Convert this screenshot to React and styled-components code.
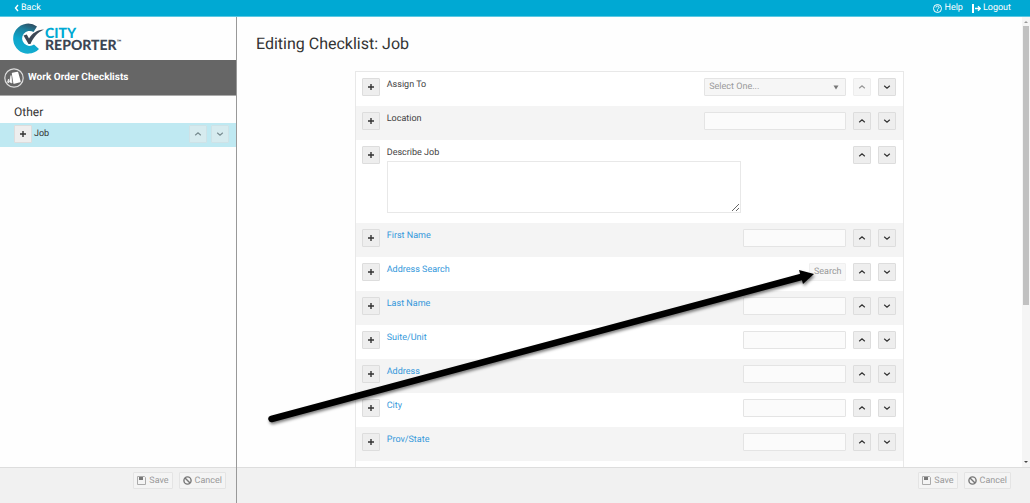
import styled, { createGlobalStyle } from "styled-components";

const GlobalStyle = createGlobalStyle`
  * {
    box-sizing: border-box;
  }
  body {
    margin: 0;
    font-family: Roboto, "Liberation Sans", sans-serif;
    font-size: 9px;
    line-height: 12px;
    text-rendering: geometricPrecision;
    color: #333;
    background-color: #fefefe;
  }
  button, input, select, textarea {
    font: inherit;
    text-rendering: inherit;
    margin: 0;
  }
`;

// Page frame

const Page = styled.div`
  height: 100vh;
  display: flex;
  flex-direction: column;
`;

const TopBar = styled.header`
  flex: none;
  display: flex;
  justify-content: space-between;
  height: 17px;
  padding: 0 19px 0 14px;
  background-color: #00a9d3;
  border-bottom: 1px solid #5cc8e2;
`;

const TopLinks = styled.nav`
  display: flex;
  gap: 9px;
`;

const TopLink = styled.a`
  display: flex;
  align-items: center;
  gap: 2px;
  color: white;
  text-decoration: none;
`;

const Panes = styled.div`
  flex: 1;
  min-height: 0;
  display: flex;
`;

const Sidebar = styled.aside`
  flex: none;
  display: flex;
  flex-direction: column;
  width: 237px;
  border-right: 1px solid #999;
`;

const Main = styled.main`
  position: relative;
  flex: 1;
  min-width: 0;
  display: flex;
  flex-direction: column;
`;

const PaneBody = styled.div`
  flex: 1;
  min-height: 0;
  display: flex;
  flex-direction: column;
  overflow: hidden;
`;

const Footer = styled.footer`
  flex: none;
  display: flex;
  justify-content: flex-end;
  gap: 6px;
  height: 36px;
  padding: 4px ${({ $inset }) => $inset}px 0;
  background-color: #f1f1f1;
  border-top: 1px solid #ddd;
`;

const FooterButton = styled.button`
  display: flex;
  align-items: center;
  gap: 3px;
  height: 17px;
  padding: 0 3px;
  color: #999;
  background-color: #f4f4f4;
  border: 1px solid #e4e4e4;
  border-radius: 1px;
`;

// Sidebar parts

const Logo = styled.div`
  display: flex;
  align-items: center;
  height: 43px;
  padding-left: 12px;
`;

const LogoText = styled.div`
  font-family: Lato, sans-serif;
  font-size: 14px;
  font-weight: 900;
  line-height: 12px;
  color: #3c4654;
`;

const LogoCity = styled.div`
  color: #00a9d3;
`;

const Trademark = styled.sup`
  font-size: 6px;
  line-height: 0;
`;

const SectionTitle = styled.h2`
  display: flex;
  align-items: center;
  gap: 4px;
  height: 36px;
  margin: 0;
  padding-left: 4px;
  color: white;
  background-color: #666;
  border-bottom: 1px solid #aaa;
  font-size: 10px;
  font-weight: 700;
`;

const GroupTitle = styled.h3`
  margin: 0;
  padding: 9px 14px 4px;
  font-size: 12px;
  font-weight: 400;
  line-height: 14px;
`;

const ChecklistItem = styled.div`
  display: flex;
  gap: 2px;
  height: 24px;
  padding: 2px 7px 0 14px;
  background-color: #bfe9f2;
`;

const ItemName = styled.span`
  flex: 1;
  padding-top: 3px;
`;

// Form parts

const Title = styled.h1`
  margin: 0;
  padding: 17px 19px 18px;
  font-size: 16px;
  font-weight: 400;
  line-height: 19px;
`;

const Scroller = styled.div`
  flex: 1;
  min-height: 0;
  display: flex;
`;

const Content = styled.div`
  flex: 1;
  min-width: 0;
  overflow: hidden;
`;

const Fields = styled.div`
  width: 70%;
  margin: 0 auto;
  padding-bottom: 34px;
  background-color: white;
  border: 1px solid #e8e8e8;
`;

const Row = styled.div`
  display: flex;
  gap: 7px;
  min-height: 34px;
  padding: 6px 7px 10px 6px;
  background-color: white;
  &:nth-child(even) {
    background-color: #f4f4f4;
  }
`;

const Field = styled.div`
  flex: 1;
  display: flex;
  flex-direction: ${({ $stacked }) => ($stacked ? "column" : "row")};
  justify-content: space-between;
`;

const Label = styled.label`
  padding-top: 1px;
  color: ${({ $link }) => ($link ? "#3498db" : "#444")};
`;

const Moves = styled.div`
  display: flex;
  align-items: flex-start;
  gap: ${({ $tight }) => ($tight ? 4 : 7)}px;
`;

const IconButton = styled.button`
  flex: none;
  display: flex;
  align-items: center;
  justify-content: center;
  width: 18px;
  height: 18px;
  padding: 0;
  color: #333;
  background-color: #eee;
  border: 1px solid #ddd;
  border-radius: 1px;
  opacity: ${({ $faded }) => ($faded ? 0.5 : 1)};
`;

const TextBox = styled.input`
  width: ${({ $wide }) => ($wide ? 142 : 103)}px;
  height: 18px;
  background-color: #fbfbfb;
  border: 1px solid #e4e4e4;
  border-radius: 1px;
`;

const TextArea = styled.textarea`
  width: 354px;
  height: 52px;
  margin-top: 2px;
  background-color: white;
  border: 1px solid #e8e8e8;
`;

const SelectWrap = styled.div`
  position: relative;
  width: 142px;
  height: 18px;
`;

const Select = styled.select`
  appearance: none;
  width: 100%;
  height: 18px;
  padding: 0 4px;
  color: #999;
  background-color: #f6f6f6;
  border: 1px solid #e4e4e4;
  border-radius: 1px;
  opacity: 1;
`;

const Caret = styled.svg`
  position: absolute;
  top: 7px;
  right: 7px;
`;

const SearchButton = styled.button`
  width: 37px;
  height: 18px;
  padding: 0;
  color: #999;
  background-color: #f7f7f7;
  border: 1px solid #f0f0f0;
  border-radius: 1px;
`;

// Scrollbar

const Scrollbar = styled.div`
  flex: none;
  display: flex;
  flex-direction: column;
  align-items: center;
  justify-content: space-between;
  width: 8px;
  background-color: #f5f5f5;
`;

const Thumb = styled.div`
  flex: none;
  width: 6px;
  height: 62%;
  margin-bottom: auto;
  background-color: #c1c1c1;
`;

const Pointer = styled.svg`
  position: absolute;
  top: 0;
  left: 0;
  pointer-events: none;
`;

const PlusIcon = () => (
  <svg width="8" height="8" viewBox="0 0 8 8" aria-hidden="true">
    <path d="M4 1v6M1 4h6" stroke="currentColor" strokeWidth="1.4" />
  </svg>
);

const ChevronIcon = ({ up }) => (
  <svg width="8" height="8" viewBox="0 0 8 8" aria-hidden="true">
    <path
      d={up ? "M1.2 5.2L4 2.8l2.8 2.4" : "M1.2 2.8L4 5.2l2.8-2.4"}
      fill="none"
      stroke="currentColor"
      strokeWidth="1.2"
    />
  </svg>
);

const SaveIcon = () => (
  <svg width="9" height="9" viewBox="0 0 9 9" aria-hidden="true">
    <path d="M.5 .5h7l1 1v7h-8z" fill="none" stroke="#aaa" />
    <path d="M2 1h4v3H2z" fill="#777" />
  </svg>
);

const CancelIcon = () => (
  <svg width="9" height="9" viewBox="0 0 9 9" aria-hidden="true">
    <circle cx="4.5" cy="4.5" r="3.6" fill="none" stroke="#777" strokeWidth="1.4" />
    <path d="M2 2l5 5" stroke="#777" strokeWidth="1.4" />
  </svg>
);

const LogoMark = () => (
  <svg width="33" height="32" viewBox="0 0 33 32" aria-hidden="true">
    <defs>
      <linearGradient id="mark" x1="0.7" y1="0" x2="0.4" y2="1">
        <stop offset="0" stopColor="#2f4e62" />
        <stop offset="0.25" stopColor="#1d7f9c" />
        <stop offset="0.6" stopColor="#0ca6cc" />
        <stop offset="1" stopColor="#17aed0" />
      </linearGradient>
    </defs>
    <path
      d="M25 3.5A15 15 0 1 0 27 26L22 21.5A7.5 7.5 0 1 1 21.5 9Z"
      fill="url(#mark)"
    />
    <path
      d="M11.5 12.5l3.3-1 2.200 4C20.5 10 25 7 32 6.5 25.5 9.5 21.5 14 18.5 21h-2z"
      fill="#3c4654"
    />
  </svg>
);

const CardsIcon = () => (
  <svg width="20" height="20" viewBox="0 0 20 20" aria-hidden="true">
    <circle cx="10" cy="10" r="9.2" fill="none" stroke="#ddd" strokeWidth="1.2" />
    <path d="M8.5 5.5l5-1 2.5 9-6 1.5z" fill="white" stroke="white" strokeWidth="1.4" strokeLinejoin="round" />
    <path d="M7 7.5l1 7.5-2.5-1zM4.500 11v4l-1-1z" fill="white" stroke="white" strokeWidth="0.6" />
  </svg>
);

const fields = [
  { label: "Assign To", type: "select", first: true },
  { label: "Location", type: "wide" },
  { label: "Describe Job", type: "area" },
  { label: "First Name", link: true },
  { label: "Address Search", type: "search", link: true },
  { label: "Last Name", link: true },
  { label: "Suite/Unit", link: true },
  { label: "Address", link: true },
  { label: "City", link: true },
  { label: "Prov/State", link: true },
];

function Control({ id, type }) {
  if (type === "select") {
    return (
      <SelectWrap>
        <Select id={id} disabled>
          <option>Select One...</option>
        </Select>
        <Caret width="6" height="5" viewBox="0 0 6 5" aria-hidden="true">
          <path d="M.5 .5h5L3 4.5z" fill="#777" />
        </Caret>
      </SelectWrap>
    );
  }
  if (type === "area") {
    return <TextArea id={id} />;
  }
  if (type === "search") {
    return (
      <SearchButton id={id} type="button">
        Search
      </SearchButton>
    );
  }
  return <TextBox id={id} type="text" $wide={type === "wide"} />;
}

function FieldRow({ field, index }) {
  const id = `field-${index}`;
  return (
    <Row>
      <IconButton type="button" aria-label={`Add after ${field.label}`}>
        <PlusIcon />
      </IconButton>
      <Field $stacked={field.type === "area"}>
        <Label htmlFor={id} $link={field.link}>
          {field.label}
        </Label>
        <Control id={id} type={field.type} />
      </Field>
      <Moves>
        <IconButton type="button" aria-label="Move up" $faded={field.first}>
          <ChevronIcon up />
        </IconButton>
        <IconButton type="button" aria-label="Move down">
          <ChevronIcon />
        </IconButton>
      </Moves>
    </Row>
  );
}

function Actions({ inset }) {
  return (
    <Footer $inset={inset}>
      <FooterButton type="button">
        <SaveIcon />
        Save
      </FooterButton>
      <FooterButton type="button">
        <CancelIcon />
        Cancel
      </FooterButton>
    </Footer>
  );
}

/** Checklist editor: list of checklists on the left, its fields on the right */
function App() {
  return (
    <Page>
      <GlobalStyle />
      <TopBar>
        <TopLink href="#back">
          <svg width="5" height="8" viewBox="0 0 5 8" aria-hidden="true">
            <path d="M4 1L1.5 4 4 7" fill="none" stroke="white" strokeWidth="1.4" />
          </svg>
          Back
        </TopLink>
        <TopLinks>
          <TopLink href="#help">
            <svg width="9" height="9" viewBox="0 0 9 9" aria-hidden="true">
              <circle cx="4.5" cy="4.5" r="4" fill="none" stroke="white" />
              <path
                d="M3 3.5c0-2 3-2 3 0 0 1-1.500 1-1.500 2M4.500 6.200v1"
                fill="none"
                stroke="white"
              />
            </svg>
            Help
          </TopLink>
          <TopLink href="#logout">
            <svg width="9" height="9" viewBox="0 0 9 9" aria-hidden="true">
              <path d="M0 0h2v9H0z" fill="white" />
              <path d="M3 4.5h5M6 2.2l2.3 2.3L6 6.8" fill="none" stroke="white" strokeWidth="1.3" />
            </svg>
            Logout
          </TopLink>
        </TopLinks>
      </TopBar>
      <Panes>
        <Sidebar>
          <PaneBody>
            <Logo>
              <LogoMark />
              <LogoText>
                <LogoCity>CITY</LogoCity>
                REPORTER<Trademark>™</Trademark>
              </LogoText>
            </Logo>
            <SectionTitle>
              <CardsIcon />
              Work Order Checklists
            </SectionTitle>
            <GroupTitle>Other</GroupTitle>
            <ChecklistItem>
              <IconButton type="button" aria-label="Add checklist">
                <PlusIcon />
              </IconButton>
              <ItemName>Job</ItemName>
              <Moves $tight>
                <IconButton type="button" aria-label="Move up" $faded>
                  <ChevronIcon up />
                </IconButton>
                <IconButton type="button" aria-label="Move down" $faded>
                  <ChevronIcon />
                </IconButton>
              </Moves>
            </ChecklistItem>
          </PaneBody>
          <Actions inset={10} />
        </Sidebar>
        <Main>
          <Scroller>
            <Content>
              <Title>Editing Checklist: Job</Title>
              <Fields>
                {fields.map((field, index) => (
                  <FieldRow key={field.label} field={field} index={index} />
                ))}
              </Fields>
            </Content>
            <Scrollbar>
              <svg width="8" height="9" viewBox="0 0 8 9" aria-hidden="true">
                <path d="M2 6h4L4 4z" fill="#999" />
              </svg>
              <Thumb />
              <svg width="8" height="9" viewBox="0 0 8 9" aria-hidden="true">
                <path d="M2 3h4L4 5z" fill="#444" />
              </svg>
            </Scrollbar>
          </Scroller>
          <Actions inset={19} />
          <Pointer width="600" height="420" viewBox="0 0 600 420" aria-hidden="true">
            <defs>
              <filter id="shadow" x="-5%" y="-5%" width="110%" height="115%">
                <feDropShadow dx="1" dy="2" stdDeviation="1.5" floodOpacity="0.5" />
              </filter>
            </defs>
            <g filter="url(#shadow)">
              <path d="M34.5 402L566 259.5" stroke="black" strokeWidth="6.5" strokeLinecap="round" />
              <path d="M562 253L577 257 566 267z" fill="black" />
            </g>
          </Pointer>
        </Main>
      </Panes>
    </Page>
  );
}

export default App;
